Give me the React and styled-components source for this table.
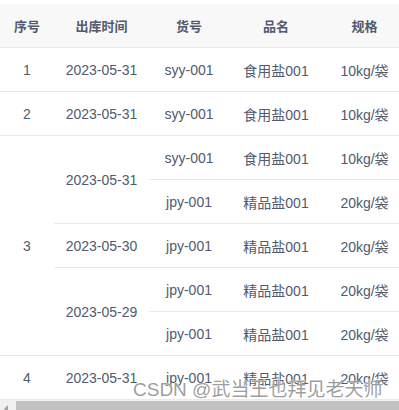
import React from 'react';
import styled, { createGlobalStyle } from 'styled-components';

const GlobalStyle = createGlobalStyle`
  html, body {
    margin: 0;
    padding: 0;
    background: #fff;
    overflow: hidden;
  }
  body {
    font-family: "Liberation Sans", Arial, "Noto Sans CJK SC", sans-serif;
  }
`;

const columns = [
  { key: 'no', title: '序号', width: 54 },
  { key: 'date', title: '出库时间', width: 95 },
  { key: 'code', title: '货号', width: 80 },
  { key: 'name', title: '品名', width: 94 },
  { key: 'spec', title: '规格', width: 83 },
];

const salt = { code: 'syy-001', name: '食用盐001', spec: '10kg/袋' };
const fine = { code: 'jpy-001', name: '精品盐001', spec: '20kg/袋' };

// each row carries the cells it starts, with their rowSpan
const rows = [
  { no: ['1', 1], date: ['2023-05-31', 1], ...salt },
  { no: ['2', 1], date: ['2023-05-31', 1], ...salt },
  { no: ['3', 5], date: ['2023-05-31', 2], ...salt },
  { ...fine },
  { date: ['2023-05-30', 1], ...fine },
  { date: ['2023-05-29', 2], ...fine },
  { ...fine },
  { no: ['4', 1], date: ['2023-05-31', 1], ...fine },
];

const App = () => {
  return (
    <>
      <GlobalStyle />
      <S.Page>
        <S.TableWrapper>
          <S.Table>
            <colgroup>
              {columns.map((c) => (
                <col key={c.key} style={{ width: c.width }} />
              ))}
            </colgroup>
            <thead>
              <tr>
                {columns.map((c) => (
                  <S.TH key={c.key}>{c.title}</S.TH>
                ))}
              </tr>
            </thead>
            <tbody>
              {rows.map((row, i) => (
                <tr key={i}>
                  {row.no && <S.TD rowSpan={row.no[1]}>{row.no[0]}</S.TD>}
                  {row.date && <S.TD rowSpan={row.date[1]}>{row.date[0]}</S.TD>}
                  <S.TD>{row.code}</S.TD>
                  <S.TD>{row.name}</S.TD>
                  <S.TD>{row.spec}</S.TD>
                </tr>
              ))}
            </tbody>
          </S.Table>
        </S.TableWrapper>
        <S.ScrollTrack>
          <S.ArrowButton>
            <S.Arrow />
          </S.ArrowButton>
          <S.Thumb />
        </S.ScrollTrack>
        <S.Watermark>CSDN @武当王也拜见老天师</S.Watermark>
      </S.Page>
    </>
  );
};
export default App;

const S = {
  Page: styled.div`
    position: relative;
    width: 399px;
    height: 410px;
    padding-top: 4px;
    box-sizing: border-box;
    overflow: hidden;
  `,
  TableWrapper: styled.div`
    width: 399px;
    overflow: hidden;
  `,
  Table: styled.table`
    width: 406px;
    table-layout: fixed;
    border-collapse: separate;
    border-spacing: 0;
  `,
  TH: styled.th`
    height: 43px;
    padding: 0;
    background-color: #f8f8f9;
    border-bottom: 1px solid #e8eaec;
    color: #515a6e;
    font-size: 13px;
    font-weight: 700;
    text-align: center;
    vertical-align: middle;
  `,
  TD: styled.td`
    height: 43px;
    padding: 0;
    border-bottom: 1px solid #e8eaec;
    color: #515a6e;
    font-size: 14px;
    text-align: center;
    vertical-align: middle;
    white-space: nowrap;
  `,
  ScrollTrack: styled.div`
    display: flex;
    width: 430px;
    height: 17px;
    background-color: #f1f1f1;
  `,
  ArrowButton: styled.div`
    width: 16px;
    display: flex;
    align-items: center;
    justify-content: center;
  `,
  Arrow: styled.div`
    width: 0;
    height: 0;
    border-top: 4px solid transparent;
    border-bottom: 4px solid transparent;
    border-right: 4px solid #a3a3a3;
    margin-right: 4px;
  `,
  Thumb: styled.div`
    flex: 1;
    margin: 1px 0 2px;
    background-color: #c1c1c1;
  `,
  Watermark: styled.div`
    position: absolute;
    left: 133px;
    top: 379px;
    font-size: 19px;
    line-height: 21px;
    color: rgba(140, 140, 140, 0.85);
    text-shadow: 0 0 1px #fff, 0 0 1px #fff;
    white-space: nowrap;
    pointer-events: none;
  `,
};
